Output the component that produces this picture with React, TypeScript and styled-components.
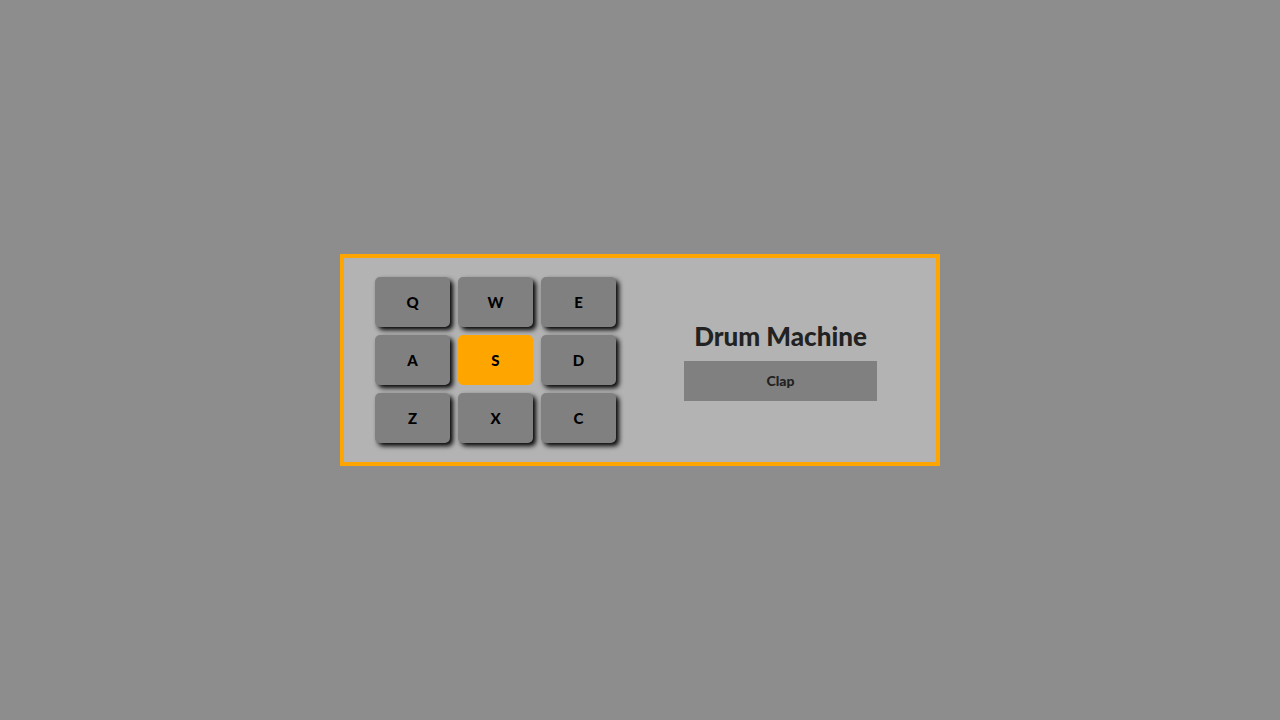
import React, { useState } from 'react'
import styled, { createGlobalStyle } from 'styled-components'

const GlobalStyle = createGlobalStyle`
  html, body {
    margin: 0;
    padding: 0;
    height: 100%;
    background-color: #8d8d8d;
    font-family: Lato, "Liberation Sans", sans-serif;
  }
  #root {
    height: 100%;
  }
`

const Page = styled.div`
  display: flex;
  justify-content: center;
  align-items: center;
  height: 720px;
`

const Machine = styled.div`
  box-sizing: border-box;
  width: 600px;
  height: 212px;
  border: 4px solid #ffa500;
  background-color: #b3b3b3;
  display: flex;
  align-items: center;
  padding-left: 31px;
`

const PadBank = styled.div`
  display: grid;
  grid-template-columns: repeat(3, 75px);
  grid-auto-rows: 50px;
  gap: 8px;
`

const Pad = styled.div<{ $active?: boolean }>`
  display: flex;
  justify-content: center;
  align-items: center;
  border-radius: 5px;
  background-color: ${p => (p.$active ? '#ffa500' : '#808080')};
  box-shadow: ${p => (p.$active ? 'none' : '3px 3px 5px #000')};
  font-weight: 900;
  font-size: 15px;
  color: #000;
  cursor: pointer;
`

const Display = styled.div`
  display: flex;
  flex-direction: column;
  align-items: center;
  margin-left: 68px;
  width: 193px;
`

const Title = styled.h1`
  margin: 0 0 9px;
  font-size: 26px;
  font-weight: 900;
  color: #222;
  white-space: nowrap;
`

const Screen = styled.div`
  width: 193px;
  height: 40px;
  display: flex;
  justify-content: center;
  align-items: center;
  background-color: #808080;
  color: #222;
  font-weight: 900;
  font-size: 14px;
`

const pads = [
  { key: 'Q', name: 'Heater 1' },
  { key: 'W', name: 'Heater 2' },
  { key: 'E', name: 'Heater 3' },
  { key: 'A', name: 'Heater 4' },
  { key: 'S', name: 'Clap' },
  { key: 'D', name: 'Open HH' },
  { key: 'Z', name: "Kick n' Hat" },
  { key: 'X', name: 'Kick' },
  { key: 'C', name: 'Closed HH' },
]

function App() {
  const [active, setActive] = useState('S')
  const current = pads.find(p => p.key === active)

  return (
    <>
      <GlobalStyle />
      <Page>
        <Machine id="drum-machine">
          <PadBank>
            {pads.map(p => (
              <Pad key={p.key} $active={p.key === active} onClick={() => setActive(p.key)}>
                {p.key}
              </Pad>
            ))}
          </PadBank>
          <Display id="display">
            <Title>Drum Machine</Title>
            <Screen>{current ? current.name : ''}</Screen>
          </Display>
        </Machine>
      </Page>
    </>
  )
}

export default App
